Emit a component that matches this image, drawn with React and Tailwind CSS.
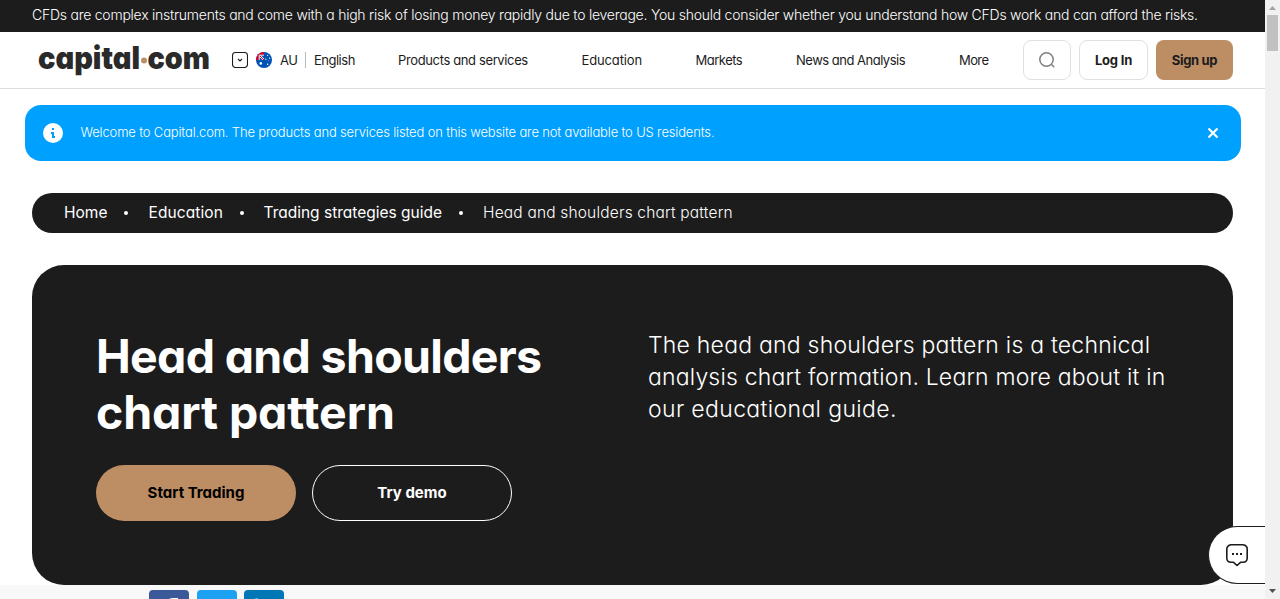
import React from "react";

function Logo() {
  return (
    <svg className="ml-[6px] h-[42px] w-[174px] shrink-0" viewBox="-1 0 174 42" fill="#2a2a2a">
      <g fontFamily="Inter, sans-serif" fontWeight="900" fontSize="31.5">
        <text x="-1" y="30" textLength="102" lengthAdjust="spacingAndGlyphs">capital</text>
        <text x="108.5" y="30" textLength="62.5" lengthAdjust="spacingAndGlyphs">com</text>
      </g>
      <circle cx="105" cy="21.5" r="3" fill="#bd8d64" />
    </svg>
  );
}

function Flag() {
  return (
    <svg className="ml-2 size-4" viewBox="0 0 16 16">
      <defs>
        <clipPath id="flag-circle"><circle cx="8" cy="8" r="8" /></clipPath>
        <clipPath id="flag-canton"><rect width="8" height="8" /></clipPath>
      </defs>
      <g clipPath="url(#flag-circle)">
        <rect width="16" height="16" fill="#0052b4" />
        <g clipPath="url(#flag-canton)">
          <path d="M0 0H8V3H3V8H0z" fill="#d80027" />
          <path d="M3.2 8V3.2H8" stroke="#fff" strokeWidth="0.9" fill="none" />
          <path d="M4 4L8 8" stroke="#fff" strokeWidth="2" />
          <path d="M4 4L8 8" stroke="#d80027" strokeWidth="1" />
        </g>
        <g fill="#fff">
          <circle cx="4.8" cy="11.4" r="1.3" />
          <circle cx="11.6" cy="3.3" r="0.65" />
          <circle cx="13.6" cy="6.2" r="0.65" />
          <circle cx="9.8" cy="7.2" r="0.65" />
          <circle cx="12.2" cy="8.3" r="0.4" />
          <circle cx="11.6" cy="12.3" r="0.75" />
        </g>
      </g>
    </svg>
  );
}

function Header() {
  return (
    <header className="flex h-[57px] items-start border-b border-[#dddddd] pt-2 pr-8 pl-8 text-[13px] leading-10 whitespace-nowrap text-[#1c1c1c]">
      <div className="flex h-10 w-[366px] items-center">
        <Logo />
        <svg className="ml-5 size-4 shrink-0" viewBox="0 0 16 16" fill="none" stroke="#1c1c1c">
          <rect x="0.5" y="0.5" width="15" height="15" rx="3" strokeWidth="1.1" />
          <path d="M6 7L8 9L10 7" strokeWidth="1.1" />
        </svg>
        <Flag />
        <span className="ml-2 w-[17px] tracking-[-0.4px]">AU</span>
        <span className="ml-2 h-4 w-px bg-[#bbbbbb]" />
        <span className="ml-2 tracking-[-0.5px]">English</span>
      </div>
      <nav className="flex h-10 w-[625px] items-center">
        <a className="w-[183.5px] tracking-[-0.37px]">Products and services</a>
        <a className="w-[114px] tracking-[-0.13px]">Education</a>
        <a className="w-[100.5px] tracking-[-0.5px]">Markets</a>
        <a className="w-[163px] tracking-[-0.5px]">News and Analysis</a>
        <a className="tracking-[-0.6px]">More</a>
      </nav>
      <div className="flex gap-2">
        <button className="flex h-10 w-12 items-center justify-center rounded-lg border border-[#e0e0e0]">
          <svg className="size-4" viewBox="0 0 16 16" fill="none" stroke="#808080" strokeWidth="1.5">
            <circle cx="7.5" cy="7.5" r="6.7" />
            <path d="M12.3 12.3L15.2 15.2" />
          </svg>
        </button>
        <button className="h-10 w-[69px] rounded-lg border border-[#e0e0e0] leading-[36px] font-bold tracking-[-0.2px]">Log In</button>
        <button className="h-10 w-[77px] rounded-lg bg-[#bd8d64] leading-[38px] font-bold tracking-[-0.35px]">Sign up</button>
      </div>
    </header>
  );
}

function Notice() {
  return (
    <div className="mt-4 ml-[25px] flex h-14 w-[1216px] items-center rounded-2xl bg-[#00a0ff] pr-[22px] pl-[18px]">
      <svg className="size-5" viewBox="0 0 20 20">
        <circle cx="10" cy="10" r="10" fill="#fff" />
        <path d="M9 5h2v2H9zM8 9h3v4h1v2H9v-4H8z" fill="#00a0ff" />
      </svg>
      <p className="mb-0.5 ml-[17.5px] text-[13px] leading-5 font-light tracking-[-0.16px] whitespace-nowrap text-white">
        Welcome to Capital.com. The products and services listed on this website are not available to US residents.
      </p>
      <svg className="ml-auto size-3" viewBox="0 0 12 12" fill="none" stroke="#fff" strokeWidth="2.2">
        <path d="M1.5 1.5L10.5 10.5M10.5 1.5L1.5 10.5" />
      </svg>
    </div>
  );
}

function Dot() {
  return <span className="size-1 rounded-full bg-white" />;
}

function Breadcrumbs() {
  return (
    <div className="mt-8 ml-8 flex h-10 w-[1201px] items-center rounded-full bg-[#1c1c1c] pl-8 text-[15.5px] leading-10 whitespace-nowrap text-white">
      <span className="w-[60px]">Home</span>
      <Dot />
      <span className="ml-[20.5px] w-[91px] tracking-[0.1px]">Education</span>
      <Dot />
      <span className="ml-5 w-[195px]">Trading strategies guide</span>
      <Dot />
      <span className="ml-[20.5px] font-light tracking-[0.18px]">Head and shoulders chart pattern</span>
    </div>
  );
}

function Hero() {
  return (
    <section className="mt-8 ml-8 flex h-80 w-[1201px] rounded-[32px] bg-[#1c1c1c] px-16 pt-[63px] text-white">
      <div className="w-[552px]">
        <h1 className="text-[46.5px] leading-14 font-[650] whitespace-nowrap">
          <span className="block tracking-[-0.68px]">Head and shoulders</span>
          <span className="block tracking-[-0.1px]">chart pattern</span>
        </h1>
        <div className="mt-[25px] flex gap-4 text-[15px] font-bold">
          <button className="h-14 w-[200px] rounded-full bg-[#bd8d64] text-black">Start Trading</button>
          <button className="h-14 w-[200px] rounded-full border border-white">Try demo</button>
        </div>
      </div>
      <p className="mt-px text-[23px] leading-8 font-light whitespace-nowrap">
        <span className="block tracking-[0.22px]">The head and shoulders pattern is a technical</span>
        <span className="block tracking-[0.18px]">analysis chart formation. Learn more about it in</span>
        <span className="block tracking-[0.36px]">our educational guide.</span>
      </p>
    </section>
  );
}

function ShareBar() {
  return (
    <div className="flex h-[14px] overflow-hidden bg-[#f8f8f8] pt-[5px] pl-[149px]">
      <svg className="h-10 w-10 shrink-0" viewBox="0 0 40 40">
        <rect width="40" height="40" rx="4" fill="#3b5998" />
        <path d="M17 40V21h-4v-5h4v-2q0-6 8-6h4v4h-3q-4 0-4 3v1h6l-1 5h-5v19z" fill="#fff" />
      </svg>
      <svg className="ml-2 h-10 w-10 shrink-0" viewBox="0 0 40 40">
        <rect width="40" height="40" rx="4" fill="#1da1f2" />
      </svg>
      <svg className="ml-[7px] h-10 w-10 shrink-0" viewBox="0 0 40 40">
        <rect width="40" height="40" rx="4" fill="#0077b5" />
        <circle cx="12.5" cy="11" r="2.6" fill="#fff" />
      </svg>
    </div>
  );
}

function Scrollbar() {
  return (
    <div className="flex h-[599px] w-[15px] shrink-0 flex-col items-center bg-[#f1f1f1]">
      <svg className="h-[15px] w-[15px] shrink-0" viewBox="0 0 15 15">
        <path d="M4 10L7.5 6L11 10z" fill="#a3a3a3" />
      </svg>
      <div className="h-9 w-[11px] bg-[#c1c1c1]" />
      <svg className="mt-auto h-[15px] w-[15px] shrink-0" viewBox="0 0 15 15">
        <path d="M4 5L7.5 9L11 5z" fill="#505050" />
      </svg>
    </div>
  );
}

export default function App() {
  return (
    <div className="relative flex h-[599px] w-[1280px] overflow-hidden bg-white font-['Inter',sans-serif] [font-feature-settings:'cv11']">
      <div className="w-[1265px] shrink-0">
        <div className="h-8 bg-[#1c1c1c] pl-8 text-[14px] leading-[30px] font-light tracking-[-0.24px] whitespace-nowrap text-white">
          CFDs are complex instruments and come with a high risk of losing money rapidly due to leverage. You should consider whether you understand how CFDs work and can afford the risks.
        </div>
        <Header />
        <Notice />
        <Breadcrumbs />
        <Hero />
        <ShareBar />
      </div>
      <Scrollbar />
      <button className="absolute top-[526px] right-[15px] flex h-[58px] w-[57px] items-center justify-center rounded-l-full border border-r-0 border-[#1c1c1c] bg-white">
        <svg className="mr-px size-6" viewBox="0 0 24 24" fill="none" stroke="#1c1c1c" strokeWidth="1.6" strokeLinejoin="round">
          <path d="M6 1.8H18Q22.2 2.5 22.2 6V15.5Q22 19 18 19.3H15.5L12 22.5L8.5 19.3H6Q2 19 1.8 15.5V6Q2 2.5 6 1.8Z" />
          <path d="M7 11h2M11 11h2M15 11h2" strokeWidth="2" />
        </svg>
      </button>
    </div>
  );
}
